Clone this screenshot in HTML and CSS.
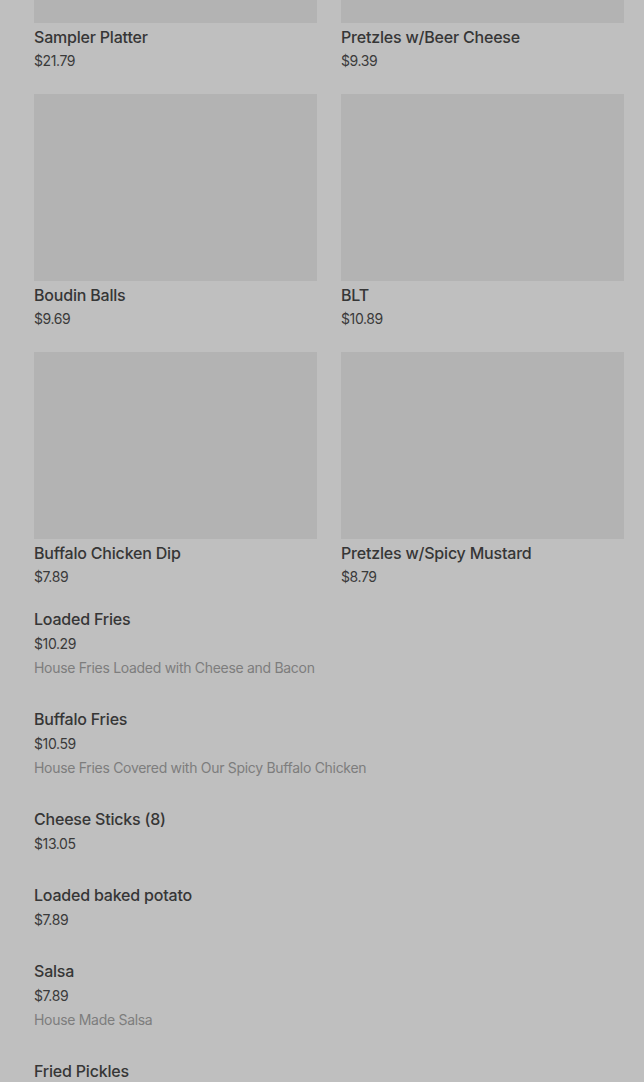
FILE: index.html
```html
<!DOCTYPE html>
<html lang="en">
<head>
<meta charset="utf-8">
<title>Menu</title>
<link rel="stylesheet" href="styles.css">
</head>
<body>
<main class="menu">
  <section class="grid">
    <article class="card"><div class="thumb"></div><h3 class="name">Sampler Platter</h3><p class="price">$21.79</p></article>
    <article class="card"><div class="thumb"></div><h3 class="name">Pretzles w/Beer Cheese</h3><p class="price">$9.39</p></article>
    <article class="card"><div class="thumb"></div><h3 class="name">Boudin Balls</h3><p class="price">$9.69</p></article>
    <article class="card"><div class="thumb"></div><h3 class="name">BLT</h3><p class="price">$10.89</p></article>
    <article class="card"><div class="thumb"></div><h3 class="name">Buffalo Chicken Dip</h3><p class="price">$7.89</p></article>
    <article class="card"><div class="thumb"></div><h3 class="name">Pretzles w/Spicy Mustard</h3><p class="price">$8.79</p></article>
  </section>
  <section class="list">
    <article class="item"><h3 class="name">Loaded Fries</h3><p class="price">$10.29</p><p class="desc">House Fries Loaded with Cheese and Bacon</p></article>
    <article class="item"><h3 class="name">Buffalo Fries</h3><p class="price">$10.59</p><p class="desc">House Fries Covered with Our Spicy Buffalo Chicken</p></article>
    <article class="item"><h3 class="name">Cheese Sticks (8)</h3><p class="price">$13.05</p></article>
    <article class="item"><h3 class="name">Loaded baked potato</h3><p class="price">$7.89</p></article>
    <article class="item"><h3 class="name">Salsa</h3><p class="price">$7.89</p><p class="desc">House Made Salsa</p></article>
    <article class="item"><h3 class="name">Fried Pickles</h3><p class="price">$7.89</p></article>
  </section>
</main>
</body>
</html>
```

FILE: styles.css
```css
* { box-sizing: border-box; }
html, body {
  margin: 0;
  padding: 0;
  background: #bfbfbf;
  overflow: hidden;
}
body {
  font-family: Inter, "Noto Sans", Roboto, sans-serif;
  color: #333333;
  height: 1082px;
}
.menu {
  margin-top: -164px;
  padding: 0 20px 0 34px;
}
.grid {
  display: grid;
  grid-template-columns: 1fr 1fr;
  column-gap: 24px;
  row-gap: 0;
}
.card {
  display: flex;
  flex-direction: column;
  height: 258px;
}
.thumb {
  height: 187px;
  background: #b3b3b3;
}
.name {
  margin: 0;
  font-size: 16px;
  font-weight: 500;
  line-height: 25px;
  color: #363636;
  letter-spacing: -0.2px;
}
.card .name { margin-top: 2px; }
.price {
  margin: 0;
  font-size: 14px;
  line-height: 22px;
  color: #3a3a3a;
  letter-spacing: -0.4px;
}
.list {
  display: flex;
  flex-direction: column;
  margin-top: -3px;
}
.item {
  padding-bottom: 27px;
}
.item .price {
  line-height: 24px;
  margin-top: 0;
}
.desc {
  margin: 0;
  font-size: 14px;
  line-height: 24px;
  color: #7d7d7d;
  letter-spacing: -0.3px;
}
```
